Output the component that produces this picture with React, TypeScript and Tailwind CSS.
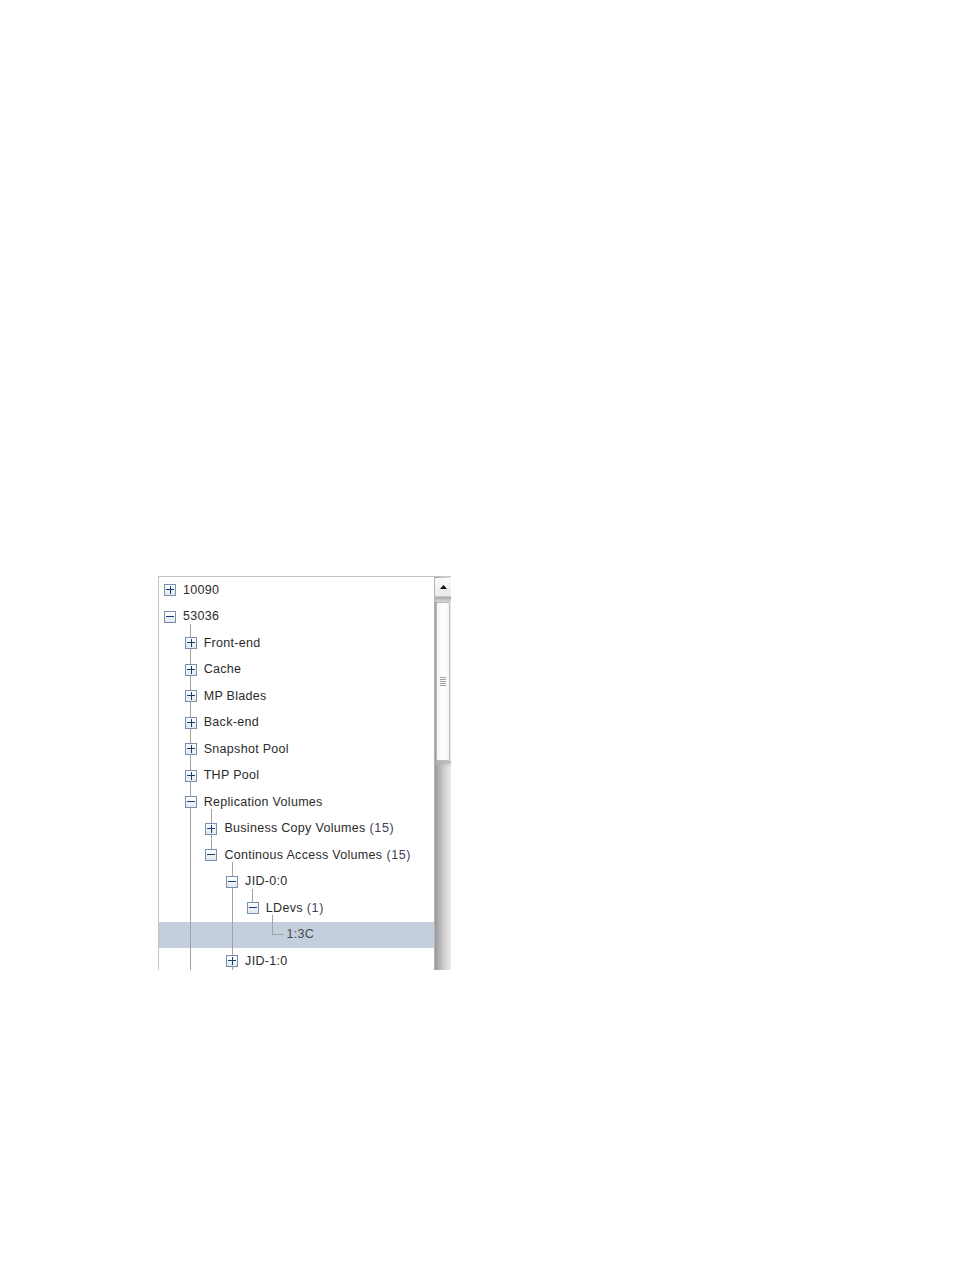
import React from 'react';

interface TreeRow {
  label: string;
  count?: string;
  depth: number;
  kind: 'plus' | 'minus' | 'leaf';
  selected?: boolean;
}

const rows: TreeRow[] = [
  { label: '10090', depth: 0, kind: 'plus' },
  { label: '53036', depth: 0, kind: 'minus' },
  { label: 'Front-end', depth: 1, kind: 'plus' },
  { label: 'Cache', depth: 1, kind: 'plus' },
  { label: 'MP Blades', depth: 1, kind: 'plus' },
  { label: 'Back-end', depth: 1, kind: 'plus' },
  { label: 'Snapshot Pool', depth: 1, kind: 'plus' },
  { label: 'THP Pool', depth: 1, kind: 'plus' },
  { label: 'Replication Volumes', depth: 1, kind: 'minus' },
  { label: 'Business Copy Volumes', count: '(15)', depth: 2, kind: 'plus' },
  { label: 'Continous Access Volumes', count: '(15)', depth: 2, kind: 'minus' },
  { label: 'JID-0:0', depth: 3, kind: 'minus' },
  { label: 'LDevs', count: '(1)', depth: 4, kind: 'minus' },
  { label: '1:3C', depth: 5, kind: 'leaf', selected: true },
  { label: 'JID-1:0', depth: 3, kind: 'plus' },
];

const ROW_H = 26.5;
const INDENT = 20.7;
const center = (i: number) => ROW_H / 2 + ROW_H * i;
const col = (k: number) => 10.5 + INDENT * k;

// vertical guide: column level, parent row, child rows, runs to bottom?
const guides: { level: number; parent: number; children: number[]; toEnd?: boolean }[] = [
  { level: 1, parent: 1, children: [2, 3, 4, 5, 6, 7, 8], toEnd: true },
  { level: 2, parent: 8, children: [9, 10] },
  { level: 3, parent: 10, children: [11, 14], toEnd: true },
  { level: 4, parent: 11, children: [12] },
];

function Connectors() {
  const segs: [number, number, number, number][] = [];
  guides.forEach((g) => {
    const x = col(g.level);
    let y = center(g.parent) + 7;
    g.children.forEach((c) => {
      segs.push([x, y, x, center(c) - 6]);
      y = center(c) + 6;
    });
    if (g.toEnd) segs.push([x, y, x, 400]);
  });
  // leaf elbow under LDevs
  const lx = col(5) - 1;
  segs.push([lx, center(12) + 7, lx, center(13)]);
  segs.push([lx, center(13), lx + 11, center(13)]);

  return (
    <svg className="absolute inset-0 w-full h-full pointer-events-none" shapeRendering="crispEdges">
      {segs.map(([x1, y1, x2, y2], i) => (
        <line key={i} x1={Math.round(x1) + 0.5} y1={y1} x2={Math.round(x2) + 0.5} y2={y2} stroke="#a3a3a3" strokeWidth={1} />
      ))}
    </svg>
  );
}

function ToggleBox({ open }: { open: boolean }) {
  return (
    <span className="w-[12px] h-[12px] border border-[#7890ad] bg-gradient-to-b from-white to-[#e2e8ef] flex items-center justify-center shrink-0 mr-[7px]">
      <svg width="10" height="10" viewBox="0 0 10 10" shapeRendering="crispEdges">
        <rect x="1" y="4" width="8" height="1" fill="#173f6e" />
        {!open && <rect x="4.5" y="1" width="1" height="8" fill="#173f6e" />}
      </svg>
    </span>
  );
}

function Row({ row }: { row: TreeRow }) {
  return (
    <div
      className={`h-[26.5px] flex items-center text-[12.5px] tracking-[0.3px] text-[#2b2b2b] ${row.selected ? 'bg-[#c3cfdc]' : ''}`}
      style={{ paddingLeft: 5 + INDENT * row.depth }}
    >
      {row.kind === 'leaf' ? (
        <span className="w-[12px] mr-[7px] shrink-0" />
      ) : (
        <ToggleBox open={row.kind === 'minus'} />
      )}
      <span className={`whitespace-nowrap ${row.kind === 'leaf' ? 'text-[#4a4a4a]' : ''}`}>
        {row.label}
        {row.count && <span className="text-[#3f3d5a] tracking-[0.6px]"> {row.count}</span>}
      </span>
    </div>
  );
}

function ScrollBar() {
  return (
    <div className="w-[17px] flex flex-col bg-gradient-to-r from-[#999] via-[#c9c9c9] to-[#ededed] border-l border-[#b5b5b5]">
      <div className="h-[19px] mt-[1px] bg-gradient-to-b from-[#fafafa] to-[#e9e9e9] border-b border-[#c8c8c8] flex items-center justify-center">
        <svg width="7" height="4" viewBox="0 0 7 4">
          <path d="M0 4 L3.5 0 L7 4 Z" fill="#111" />
        </svg>
      </div>
      <div className="h-[5px] bg-gradient-to-b from-[#aaa] to-[#d8d8d8]" />
      <div className="h-[159px] mx-[1px] rounded-[2px] border border-[#bdbdbd] bg-gradient-to-r from-[#f2f2f2] via-white to-[#f5f5f5] flex flex-col items-center justify-center gap-[1px]">
        {[0, 1, 2, 3, 4].map((i) => (
          <span key={i} className="w-[6px] h-[1px] bg-[#a0a0a0]" />
        ))}
      </div>
      <div className="h-[6px] bg-gradient-to-b from-[#b4b4b4] to-transparent" />
    </div>
  );
}

export default function App() {
  return (
    <div className="w-[954px] h-[1270px] bg-white pt-[576px] pl-[158px]" style={{ fontFamily: '"Liberation Sans", Arial, sans-serif' }}>
      <div className="w-[293px] h-[394px] border-l border-t border-[#c4c4c4] flex overflow-hidden">
        <div className="relative flex-1 bg-white">
          <div className="flex flex-col">
            {rows.map((row, i) => (
              <Row key={i} row={row} />
            ))}
          </div>
          <Connectors />
        </div>
        <ScrollBar />
      </div>
    </div>
  );
}
